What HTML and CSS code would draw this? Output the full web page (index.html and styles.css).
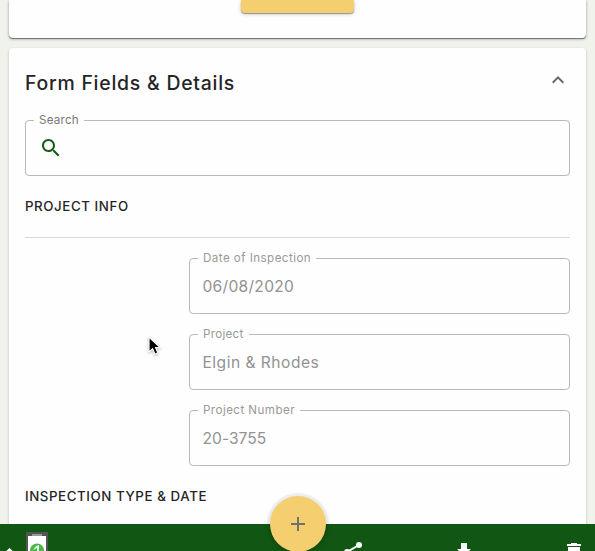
FILE: index.html
```html
<!DOCTYPE html>
<html lang="en">
<head>
<meta charset="utf-8">
<title>Form Fields &amp; Details</title>
<link rel="stylesheet" href="styles.css">
</head>
<body>
<div class="app">
  <main class="content">
    <section class="card card-previous"><div class="card-action"></div></section>
    <section class="card card-details">
      <header class="card-header">
        <h2><span class="title-text">Form Fields &amp; Details</span></h2>
        <svg class="chevron" width="24" height="24" viewBox="0 0 24 24"><path d="M12 8l-6 6 1.41 1.41L12 10.83l4.59 4.58L18 14z"/></svg>
      </header>
      <fieldset class="field search">
        <legend><span class="label-search">Search</span></legend>
        <svg class="search-icon" width="24" height="24" viewBox="0 0 24 24"><path d="M15.5 14h-.79l-.28-.27C15.41 12.59 16 11.11 16 9.5 16 5.91 13.09 3 9.5 3S3 5.91 3 9.5 5.91 16 9.5 16c1.61 0 3.09-.59 4.23-1.57l.27.28v.79l5 4.99L20.49 19l-4.99-5zm-6 0C7.01 14 5 11.99 5 9.5S7.01 5 9.5 5 14 7.01 14 9.5 11.99 14 9.5 14z"/></svg>
      </fieldset>
      <h3 class="section-title project-title"><span>PROJECT INFO</span></h3>
      <div class="fields">
        <fieldset class="field"><legend><span class="label-date">Date of Inspection</span></legend><span class="value value-date">06/08/2020</span></fieldset>
        <fieldset class="field"><legend><span class="label-project">Project</span></legend><span class="value value-project">Elgin &amp; Rhodes</span></fieldset>
        <fieldset class="field"><legend><span class="label-number">Project Number</span></legend><span class="value value-number">20-3755</span></fieldset>
      </div>
      <h3 class="section-title inspection-title"><span>INSPECTION TYPE &amp; DATE</span></h3>
    </section>
  </main>
  <footer class="toolbar">
    <svg class="tool-home" width="20" height="27" viewBox="0 0 20 27"><path d="M9.5 24L-1 34h21z"/></svg>
    <svg class="tool-phone" width="22" height="27" viewBox="0 0 22 27">
      <path fill="#555" d="M0 8h22v19H0z"/><path fill="#fff" d="M2 12h18v15H2z"/><path fill="#999" d="M6 10h10v2H6z"/>
      <circle cx="11" cy="26.5" r="7" fill="#49b749"/><path fill="#e2f5e2" d="M10 22l3-1v6h-2v-3l-4 2z"/>
    </svg>
    <svg class="tool-share" width="24" height="27" viewBox="0 0 24 27"><path d="M18 21L6 28" fill="none" stroke="#fff" stroke-width="2"/><circle cx="18" cy="21" r="3"/><circle cx="6" cy="28" r="3"/></svg>
    <svg class="tool-download" width="16" height="27" viewBox="0 0 16 27"><path d="M5 19h6v6h4l-7 7-7-7h4z"/></svg>
    <svg class="tool-delete" width="14" height="27" viewBox="0 0 14 27"><path d="M0 20h4v-1h6v1h4v2H0zM1 23h12v10H1z"/></svg>
  </footer>
  <button class="fab" aria-label="Add"><svg width="24" height="24" viewBox="0 0 24 24"><path d="M19 13h-6v6h-2v-6H5v-2h6V5h2v6h6z"/></svg></button>
  <svg class="cursor" width="18" height="24" viewBox="0 0 18 24"><path d="M3 2v15l3.600-3.200 2.400 5.400 3-1.300-2.400-5.200h4.800z"/></svg>
</div>
</body>
</html>
```
FILE: styles.css
```css
* { box-sizing: border-box; }
body { margin: 0; background: #f0f3ec; font-family: Inter, "Liberation Sans", sans-serif; color: #252525; }
svg { display: block; flex: none; }
.app { position: relative; height: 551px; overflow: hidden; display: flex; flex-direction: column; }
.content { height: 524px; padding: 0 9px; display: flex; flex-direction: column; gap: 10px; overflow: hidden; }
.card { background: #fefefe; border-radius: 4px; box-shadow: 0 1px 3px rgba(0,0,0,.2), 0 1px 1px rgba(0,0,0,.14); }
.card-previous { flex: none; height: 38px; border-radius: 0 0 4px 4px; box-shadow: 0 1px 0 #777, 0 1px 3px rgba(0,0,0,.4); }
.card-action { width: 113px; height: 13px; margin: 0 auto; border-radius: 0 0 4px 4px; background: #f5ce70; box-shadow: 0 1px 1px rgba(0,0,0,.35), 0 1px 4px rgba(0,0,0,.2); }
.card-details { flex: none; height: 520px; padding: 0 16px; }
.card-header { height: 72px; display: flex; align-items: center; justify-content: space-between; padding: 0 0 4px; }
h2 { margin: 0; padding-top: 1px; font-size: 19.4px; line-height: 24px; font-weight: 500; }
.title-text { letter-spacing: .77px; }
.chevron { margin: -4px 0 0; fill: #666; }
.field { min-width: 0; height: 63px; margin: -7px 0 0; padding: 0 0 0 8px; border: 1px solid #b9b9b9; border-radius: 4px; }
legend { height: 14px; padding: 1px 5px 0; font-size: 11.6px; line-height: 13px; color: #999; white-space: nowrap; }
.search legend { color: #777; }
.label-search { letter-spacing: .25px; }
.label-date { letter-spacing: .45px; }
.label-project { letter-spacing: .3px; }
.label-number { letter-spacing: .45px; }
.search-icon { margin: 9px 0 0 5px; fill: #145c16; }
.section-title { margin: 0; font-size: 13.3px; line-height: 20px; font-weight: 500; letter-spacing: .58px; white-space: nowrap; }
.project-title { height: 62px; padding-top: 20px; border-bottom: 1px solid #d8d8d8; }
.fields { display: flex; flex-direction: column; gap: 20px; padding: 20px 0 0 164px; }
.value { display: block; margin: 12px 0 0 4.500px; font-size: 15.6px; line-height: 20px; color: #929292; white-space: nowrap; }
.value-date { letter-spacing: .27px; }
.value-project { letter-spacing: .48px; }
.value-number { letter-spacing: .03px; }
.inspection-title { padding-top: 20px; }
.toolbar { position: relative; height: 27px; background: #115713; fill: #fff; display: flex; align-items: stretch; }
.tool-phone { margin-left: 6px; }
.tool-share { margin-left: 293px; }
.tool-download { margin-left: 91px; }
.tool-delete { margin-left: 95px; }
.fab { position: absolute; left: 270px; top: 496px; width: 56px; height: 56px; padding: 16px; border: 0; border-radius: 50%; background: #f5ce70; fill: #707368; box-shadow: 0 0 0 3px rgba(0,0,0,.045), 0 2px 7px rgba(0,0,0,.14); }
.cursor { position: absolute; left: 146px; top: 335px; fill: #000; stroke: #fff; stroke-width: 1.2; filter: drop-shadow(0 1px 1px rgba(0,0,0,.3)); }
```
